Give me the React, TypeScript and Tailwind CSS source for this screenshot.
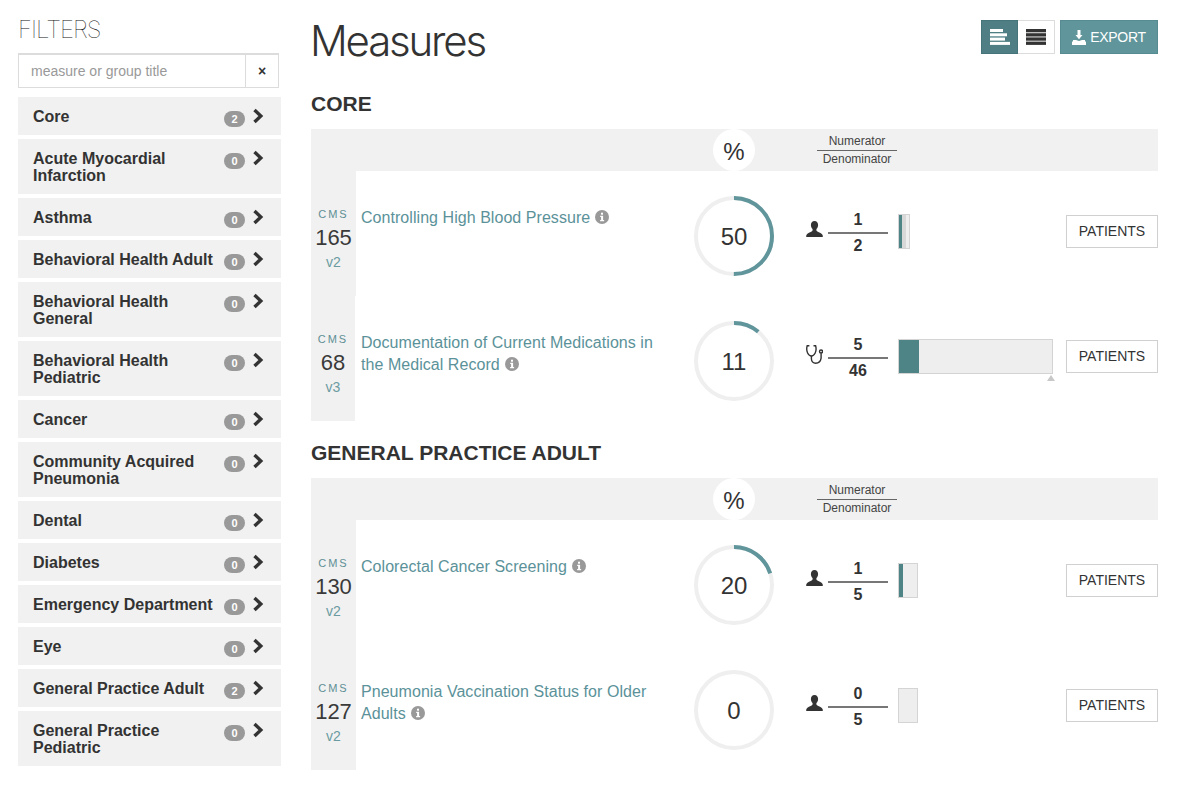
import React from "react";

const groups: [string, number][] = [
  ["Core", 2],
  ["Acute Myocardial Infarction", 0],
  ["Asthma", 0],
  ["Behavioral Health Adult", 0],
  ["Behavioral Health General", 0],
  ["Behavioral Health Pediatric", 0],
  ["Cancer", 0],
  ["Community Acquired Pneumonia", 0],
  ["Dental", 0],
  ["Diabetes", 0],
  ["Emergency Department", 0],
  ["Eye", 0],
  ["General Practice Adult", 2],
  ["General Practice Pediatric", 0],
];

function Chevron() {
  return (
    <svg width="12" height="16" viewBox="0 0 12 16" className="block">
      <path d="M2.5 2 L8.800 8 L2.500 14" fill="none" stroke="#333" strokeWidth="3.400" />
    </svg>
  );
}

function Info() {
  return (
    <svg width="14" height="14" viewBox="0 0 14 14" className="inline-block align-[-1px] ml-[5px]">
      <circle cx="7" cy="7" r="7" fill="#999" />
      <rect x="6" y="2.700" width="2" height="2" fill="#fff" />
      <path d="M5.200 5.800h2.900v4.100h1v1.300H5.100V9.900h1V7.100h-.9z" fill="#fff" />
    </svg>
  );
}

function Person() {
  return (
    <svg width="17" height="16" viewBox="0 0 17 16" className="block">
      <path
        d="M8.500 0C6.100 0 4.900 1.800 4.900 4c0 1.700.7 3.100 1.600 4 .3.9.1 1.700-.5 2.200C4.600 11.200 1.200 12 .4 14c-.2.500-.2 1.300-.2 2h16.600c0-.7 0-1.500-.2-2-.8-2-4.200-2.800-5.600-3.800-.6-.5-.8-1.300-.5-2.200.9-.9 1.600-2.300 1.600-4 0-2.200-1.200-4-3.600-4z"
        fill="#333"
      />
    </svg>
  );
}

function Stethoscope() {
  return (
    <svg width="17" height="19" viewBox="0 0 17 19" className="block shrink-0" fill="none" stroke="#333" strokeWidth="1.400">
      <path d="M3.400 .8H1.200C.5 3.300.6 6 1.600 8c1 1.900 2.400 3 3.800 3s2.800-1.100 3.800-3c1-2 1.100-4.700.4-7.200H7.500" />
      <path d="M5.400 11v2.800c0 2.600 1.900 4.400 4.300 4.400s4.900-1.700 5.400-5V8.200" />
      <circle cx="15" cy="6.500" r="1.500" />
    </svg>
  );
}

function Ring({ pct }: { pct: number }) {
  const r = 38;
  const c = 2 * Math.PI * r;
  return (
    <div className="relative w-[80px] h-[80px] shrink-0 mt-[25px]">
      <svg width="80" height="80" viewBox="0 0 80 80" className="block">
        <circle cx="40" cy="40" r={r} fill="none" stroke="#efefef" strokeWidth="4" />
        <circle
          cx="40"
          cy="40"
          r={r}
          fill="none"
          stroke="#5f959b"
          strokeWidth="4"
          strokeDasharray={`${(c * pct) / 100} ${c}`}
          transform="rotate(-90 40 40)"
        />
      </svg>
      <div className="absolute inset-0 pt-[2px] flex items-center justify-center text-[24px] text-[#333]">{pct}</div>
    </div>
  );
}

type Measure = {
  num: string;
  ver: string;
  title: React.ReactNode;
  pct: number;
  n: number;
  d: number;
  icon: "person" | "steth";
  barW: number;
  fillW: number;
  stripe?: boolean;
  tick?: boolean;
  narrow?: boolean;
};

function Row({ m }: { m: Measure }) {
  return (
    <div className="flex h-[125px]">
      <div className={`${m.narrow ? "w-[44px]" : "w-[45px]"} shrink-0 bg-[#f1f1f1] flex flex-col items-center pt-[37px]`}>
        <div className="text-[11px] leading-[13px] tracking-[2px] text-[#5f8f95]">CMS</div>
        <div className="text-[22px] leading-[26px] mt-[4px] text-[#3a3a3a]">{m.num}</div>
        <div className="text-[14px] leading-[18px] mt-[2px] text-[#6b9ba1]">{m.ver}</div>
      </div>
      <div className={`${m.narrow ? "w-[339px] pl-[6px]" : "w-[338px] pl-[5px]"} shrink-0 pr-[30px] pt-[36px] text-[16px] leading-[22px] tracking-[0.05px] text-[#5b9299]`}>
        {m.title}
        <Info />
      </div>
      <Ring pct={m.pct} />
      <div className="w-[17px] ml-[32px] mt-[48px] flex justify-center h-[20px] items-center">
        {m.icon === "person" ? <Person /> : <Stethoscope />}
      </div>
      <div className="w-[60px] ml-[5px] mt-[39px] text-center text-[16px] font-bold leading-[20px] text-[#333] shrink-0">
        <div>{m.n}</div>
        <div className="h-[2px] bg-[#777] mt-[2px] mb-[2px]" />
        <div>{m.d}</div>
      </div>
      <div
        style={{ width: m.barW }}
        className="relative ml-[10px] mt-[43px] h-[35px] border border-[#d4d4d4] bg-[#eeeeee] shrink-0"
      >
        <div className="absolute left-0 top-0 bottom-0 bg-[#4f8487]" style={{ width: m.fillW }} />
        {m.stripe && <div className="absolute left-[3px] w-[4px] top-0 bottom-0 bg-[#d8d8d8]" />}
        {m.tick && (
          <svg width="8" height="6" viewBox="0 0 8 6" className="absolute right-[-3px] top-[35px]">
            <path d="M4 0 L8 6 H0 Z" fill="#c8c8c8" />
          </svg>
        )}
      </div>
      <div className="ml-auto mt-[44px] w-[92px] h-[33px] border border-[#d0d0d0] flex items-center justify-center text-[14px] text-[#333] shrink-0">
        PATIENTS
      </div>
    </div>
  );
}

function HeaderBar() {
  return (
    <div className="flex h-[42px] bg-[#f1f1f1]">
      <div className="w-[402px] shrink-0" />
      <div className="w-[42px] h-[42px] pt-[3px] rounded-full bg-white flex items-center justify-center text-[24px] text-[#333] shrink-0">
        %
      </div>
      <div className="ml-[62px] w-[80px] text-center text-[12px] leading-[14px] text-[#444] pt-[5px] shrink-0">
        <div className="border-b border-[#666] pb-[2px] h-[17px]">Numerator</div>
        <div className="pt-[1px]">Denominator</div>
      </div>
    </div>
  );
}

function Section({ title, rows, top }: { title: string; rows: Measure[]; top: string }) {
  return (
    <section className={top}>
      <h2 className="text-[21px] leading-[24px] font-bold text-[#333] mb-[13px]">{title}</h2>
      <HeaderBar />
      {rows.map((m) => (
        <Row key={m.num} m={m} />
      ))}
    </section>
  );
}

export default function App() {
  return (
    <div className="flex items-start pl-[18px] w-[1183px] h-[786px] overflow-hidden bg-white font-['Liberation_Sans',Arial,sans-serif] text-[#333]">
      <aside className="w-[263px] shrink-0">
        <div className="pt-[17px] h-[53px] text-[24px] leading-[25px] font-thin tracking-[-1px] font-['Inter',sans-serif] text-[#111]">
          FILTERS
        </div>
        <div className="flex w-[261px] h-[35px] border border-[#dcdcdc] border-t-2">
          <div className="flex-1 pl-[12px] text-[14px] leading-[32px] text-[#999]">measure or group title</div>
          <div className="w-[33px] border-l border-[#dcdcdc] flex items-center justify-center text-[14px] font-bold text-[#333]">
            ×
          </div>
        </div>
        <div className="mt-[9px] flex flex-col gap-[4px]">
          {groups.map(([name, count]) => (
            <div key={name} className="flex items-start bg-[#f1f1f1] pl-[15px] pt-[11px] pb-[10px]">
              <div className="w-[191px] text-[16px] leading-[17px] font-bold text-[#333]">{name}</div>
              <div className="mt-[3px] -mb-[2px] w-[21px] h-[16px] rounded-full bg-[#999] text-white text-[11px] leading-[16px] font-bold text-center">
                {count}
              </div>
              <div className="ml-[7px] -mb-[1px]">
                <Chevron />
              </div>
            </div>
          ))}
        </div>
      </aside>
      <main className="w-[847px] ml-[30px] shrink-0">
        <div className="flex items-start justify-between h-[92px] pt-[20px]">
          <h1 className="text-[42px] leading-[42px] font-light font-['Inter',sans-serif] tracking-[-2.2px] -ml-[1px] text-[#333]">
            Measures
          </h1>
          <div className="flex">
            <div className="w-[37px] h-[34px] bg-[#4f7f84] border border-[#45757a] flex items-center justify-center">
              <svg width="20" height="16" viewBox="0 0 20 16">
                <g fill="#fff">
                  <rect x="0" y="0" width="13" height="3" />
                  <rect x="0" y="4.300" width="17" height="3" />
                  <rect x="0" y="8.600" width="15" height="3" />
                  <rect x="0" y="12.900" width="20" height="3" />
                </g>
              </svg>
            </div>
            <div className="w-[37px] h-[34px] bg-white border border-[#dcdcdc] border-l-0 flex items-center justify-center">
              <svg width="20" height="16" viewBox="0 0 20 16">
                <g fill="#333">
                  <rect x="0" y="0" width="20" height="3.300" />
                  <rect x="0" y="4.200" width="20" height="3.300" />
                  <rect x="0" y="8.400" width="20" height="3.300" />
                  <rect x="0" y="12.600" width="20" height="3.300" />
                </g>
              </svg>
            </div>
            <div className="ml-[5px] w-[98px] h-[34px] bg-[#5f959b] border border-[#558b91] flex items-center justify-center gap-[4px] text-white text-[14px] tracking-[-0.3px]">
              <svg width="14" height="15" viewBox="0 0 14 15">
                <path d="M5.500 0h3v5h2L7 9.300 3.500 5h2zM1 10h3l3 1 3-1h3v1.500h1V15H0v-3.500h1z" fill="#fff" />
              </svg>
              <span>EXPORT</span>
            </div>
          </div>
        </div>
        <Section
          title="CORE"
          top=""
          rows={[
            { num: "165", ver: "v2", title: "Controlling High Blood Pressure", pct: 50, n: 1, d: 2, icon: "person", barW: 12, fillW: 4, stripe: true },
            { num: "68", ver: "v3", title: "Documentation of Current Medications in the Medical Record", pct: 11, n: 5, d: 46, icon: "steth", barW: 155, fillW: 20, tick: true, narrow: true },
          ]}
        />
        <Section
          title="GENERAL PRACTICE ADULT"
          top="mt-[20px]"
          rows={[
            { num: "130", ver: "v2", title: "Colorectal Cancer Screening", pct: 20, n: 1, d: 5, icon: "person", barW: 20, fillW: 4 },
            { num: "127", ver: "v2", title: "Pneumonia Vaccination Status for Older Adults", pct: 0, n: 0, d: 5, icon: "person", barW: 20, fillW: 0 },
          ]}
        />
      </main>
    </div>
  );
}
